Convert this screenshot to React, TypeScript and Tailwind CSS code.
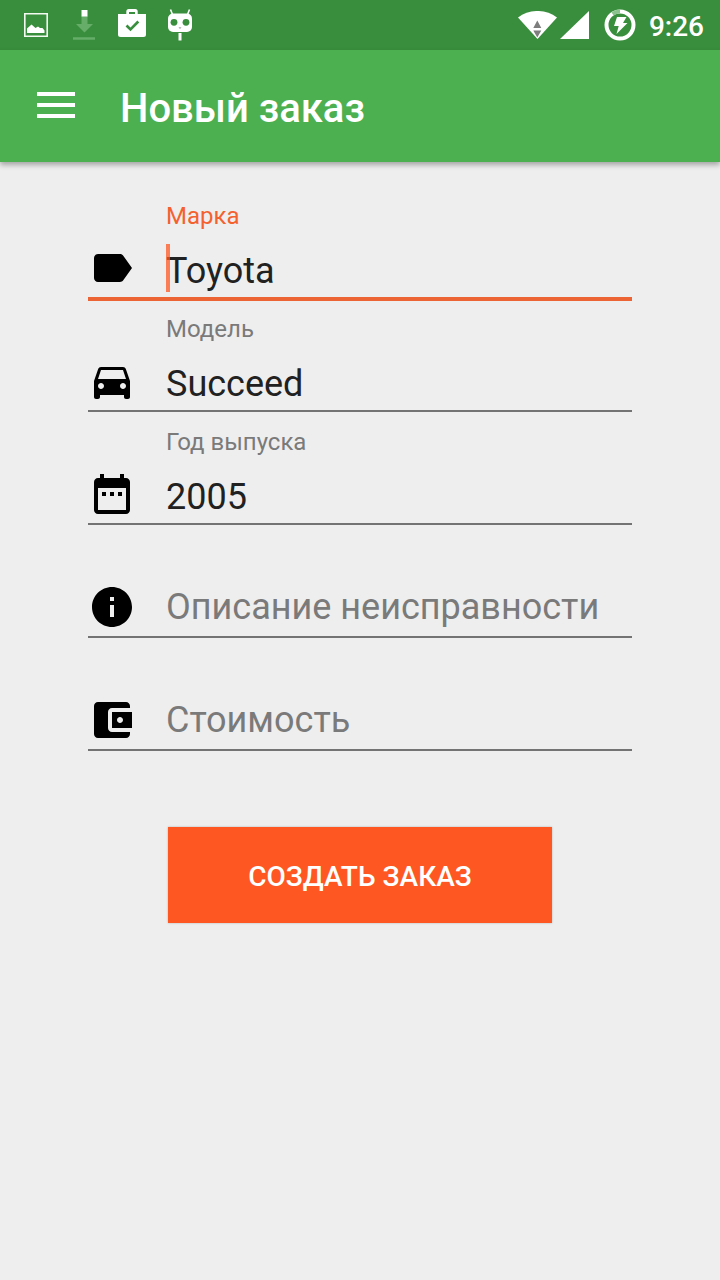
import { useState } from "react";
import type { ReactNode } from "react";

function PictureIcon() {
  return (
    <svg width="24" height="24" viewBox="0 0 24 24" aria-hidden="true">
      <path d="M0.8 0.8h22.4v22.4H0.8z" fill="none" stroke="#f2faf2" strokeWidth="1.6" />
      <path d="M3 20v-4.500l4.500-4 4 3.500 2.500-1.500 2 1.500h2.500l2 2.500V20z" fill="#fff" />
    </svg>
  );
}

function DownloadIcon() {
  return (
    <svg width="24" height="30" viewBox="0 0 24 30" aria-hidden="true">
      <path d="M9.500 6h6v8h5.500L12.500 22.500 4 14H9.500zM1 27.200h22v2.600H1z" fill="#65ad68" />
      <path d="M9.500 0h6v6.500H9.500z" fill="#fff" />
    </svg>
  );
}

function BagCheckIcon() {
  return (
    <svg width="28" height="28" viewBox="0 0 28 28" aria-hidden="true">
      <path
        fill="#fff"
        fillRule="evenodd"
        d="M8.300 5V2.500Q8.300 0 10.800 0h6.400q2.500 0 2.500 2.500V5H28v20.500q0 2.500-2.500 2.500h-23Q0 28 0 25.500V5zM11 5h6V3h-6z"
      />
      <path d="M8.500 16.500l4 4 7.800-8" fill="none" stroke="#388e3c" strokeWidth="2.600" />
    </svg>
  );
}

function DroidIcon() {
  return (
    <svg width="24" height="32" viewBox="0 0 24 32" aria-hidden="true">
      <path d="M2.500 0.500l2 5M21.500 0.500l-2 5" stroke="#fff" strokeWidth="1.600" />
      <rect y="4.500" width="24" height="18.500" rx="5" fill="#fff" />
      <circle cx="6" cy="13.300" r="3.400" fill="#388e3c" />
      <circle cx="18" cy="13.300" r="3.400" fill="#388e3c" />
      <path d="M10.500 18.500h3l-1.500 1.200z" fill="#777" />
      <path d="M10.500 24h3v7.500h-3z" fill="#fff" />
    </svg>
  );
}

function WifiIcon() {
  return (
    <svg width="39" height="28" viewBox="0 0 39 28" aria-hidden="true">
      <path d="M0 6.500C11-2.200 28-2.200 39 6.500L19.500 28z" fill="#fff" />
      <path d="M19.300 9.500l4 7.500h-8zM15.300 19.500h8l-4 7z" fill="#7d7d7d" />
    </svg>
  );
}

function SignalIcon() {
  return (
    <svg width="29" height="28" viewBox="0 0 29 28" aria-hidden="true">
      <path d="M29 0v28H0z" fill="#fff" />
    </svg>
  );
}

function BatteryIcon() {
  return (
    <svg width="32" height="32" viewBox="0 0 32 32" aria-hidden="true">
      <circle cx="16" cy="16" r="13.500" fill="none" stroke="#fff" strokeWidth="4" />
      <path d="M8.500 4.800A13.500 13.500 0 0 1 16 2.500" fill="none" stroke="#8cc28e" strokeWidth="4" />
      <path d="M13 8h9.500l-3.500 6h4.500L12.500 25l2.200-8H10z" fill="#fff" />
    </svg>
  );
}

function MenuIcon() {
  return (
    <svg width="38" height="26" viewBox="0 0 38 26" aria-hidden="true">
      <path d="M0 0h38v4H0zM0 11h38v4H0zM0 22h38v4H0z" fill="#fff" />
    </svg>
  );
}

const icons = {
  tag: "M17.630 5.840C17.270 5.330 16.670 5 16 5L5 5.010C3.900 5.010 3 5.900 3 7v10c0 1.100.9 1.990 2 1.990L16 19c.67 0 1.270-.33 1.630-.84L22 12z",
  car: "M18.920 6.010C18.720 5.420 18.160 5 17.500 5h-11c-.66 0-1.210.42-1.420 1.010L3 12v8c0 .55.45 1 1 1h1c.55 0 1-.45 1-1v-1h12v1c0 .55.45 1 1 1h1c.55 0 1-.45 1-1v-8zM6.500 16c-.83 0-1.500-.67-1.500-1.500S5.670 13 6.500 13s1.500.67 1.500 1.500S7.330 16 6.500 16zm11 0c-.83 0-1.500-.67-1.500-1.500s.67-1.500 1.500-1.500 1.500.67 1.500 1.500-.67 1.500-1.500 1.500zM5 11l1.500-4.500h11L19 11z",
  calendar:
    "M9 11H7v2h2zm4 0h-2v2h2zm4 0h-2v2h2zm2-7h-1V2h-2v2H8V2H6v2H5c-1.110 0-1.990.9-1.990 2L3 20c0 1.100.89 2 2 2h14c1.100 0 2-.9 2-2V6c0-1.100-.9-2-2-2zm0 16H5V9h14z",
  info: "M12 2C6.480 2 2 6.480 2 12s4.480 10 10 10 10-4.480 10-10S17.520 2 12 2zm1 15h-2v-6h2zm0-8h-2V7h2z",
  wallet:
    "M21 18v1c0 1.100-.9 2-2 2H5c-1.110 0-2-.9-2-2V5c0-1.100.89-2 2-2h14c1.100 0 2 .9 2 2v1h-9c-1.110 0-2 .9-2 2v8c0 1.100.89 2 2 2zm-9-2h10V8H12zm4-2.500c-.83 0-1.500-.67-1.500-1.500s.67-1.500 1.500-1.500 1.500.67 1.500 1.500-.67 1.500-1.500 1.500z",
};

interface FieldProps {
  id: string;
  label: string;
  icon: keyof typeof icons;
  initial?: string;
  active?: boolean;
}

function Field({ id, label, icon, initial = "", active = false }: FieldProps) {
  const [value, setValue] = useState(initial);
  const floating = value !== "";
  return (
    <div className="h-[113px] pt-3">
      <div className="h-8 pl-[78px]">
        {floating && (
          <label
            htmlFor={id}
            className={`block text-[24px] leading-8 ${active ? "text-[#f4612f]" : "text-[#7a7a7a]"}`}
          >
            {label}
          </label>
        )}
      </div>
      <div
        className={`mt-3 flex pb-[5px] ${active ? "border-b-4 border-[#ec6433]" : "border-b-2 border-[#737373]"}`}
      >
        <svg className="shrink-0" width="48" height="48" viewBox="0 0 24 24" aria-hidden="true">
          <path d={icons[icon]} fill="#000" />
        </svg>
        <div className="relative ml-[30px] flex-1">
          <input
            id={id}
            value={value}
            onChange={(e) => setValue(e.target.value)}
            className="block h-12 w-full bg-transparent pt-[6px] text-[36px] text-[#212121] outline-none"
          />
          {!floating && (
            <label
              htmlFor={id}
              className="absolute left-0 top-0 cursor-text whitespace-nowrap text-[36px] leading-12 text-[#7a7a7a]"
            >
              {label}
            </label>
          )}
          {active && <span className="absolute left-0 top-0 h-12 w-1 bg-[#ff5722]/75" />}
        </div>
      </div>
    </div>
  );
}

function StatusGroup({ children, className }: { children: ReactNode; className: string }) {
  return <div className={`flex items-center ${className}`}>{children}</div>;
}

export default function App() {
  return (
    <div className="min-h-screen bg-[#eeeeee] font-[Roboto,sans-serif]">
      <div className="flex h-[50px] items-center justify-between bg-[#388e3c] pl-6 pr-4">
        <StatusGroup className="gap-6">
          <PictureIcon />
          <DownloadIcon />
          <div className="-mx-0.5 pb-1">
            <BagCheckIcon />
          </div>
          <DroidIcon />
        </StatusGroup>
        <StatusGroup className="gap-[15px]">
          <div className="flex gap-[3px]">
            <WifiIcon />
            <SignalIcon />
          </div>
          <BatteryIcon />
          <span className="-ml-0.5 pt-1 text-[28px] font-medium leading-8 text-white">9:26</span>
        </StatusGroup>
      </div>

      <header className="flex h-28 items-center bg-[#4caf50] px-[37px] shadow-[0_3px_5px_rgba(0,0,0,0.3)]">
        <button type="button" aria-label="Меню" className="pb-0.5">
          <MenuIcon />
        </button>
        <h1 className="ml-[45px] pt-1.5 text-[40px] font-medium leading-12 text-white">Новый заказ</h1>
      </header>

      <form className="px-[88px] pt-[26px]" onSubmit={(e) => e.preventDefault()}>
        <Field id="brand" label="Марка" icon="tag" initial="Toyota" active />
        <Field id="model" label="Модель" icon="car" initial="Succeed" />
        <Field id="year" label="Год выпуска" icon="calendar" initial="2005" />
        <Field id="problem" label="Описание неисправности" icon="info" />
        <Field id="price" label="Стоимость" icon="wallet" />
        <div className="px-20 pt-[74px]">
          <button
            type="submit"
            className="block h-24 w-full bg-[#ff5722] pt-1 text-[28px] font-medium uppercase text-white shadow-[0_0_2px_rgba(0,0,0,0.25)]"
          >
            Создать заказ
          </button>
        </div>
      </form>
    </div>
  );
}
